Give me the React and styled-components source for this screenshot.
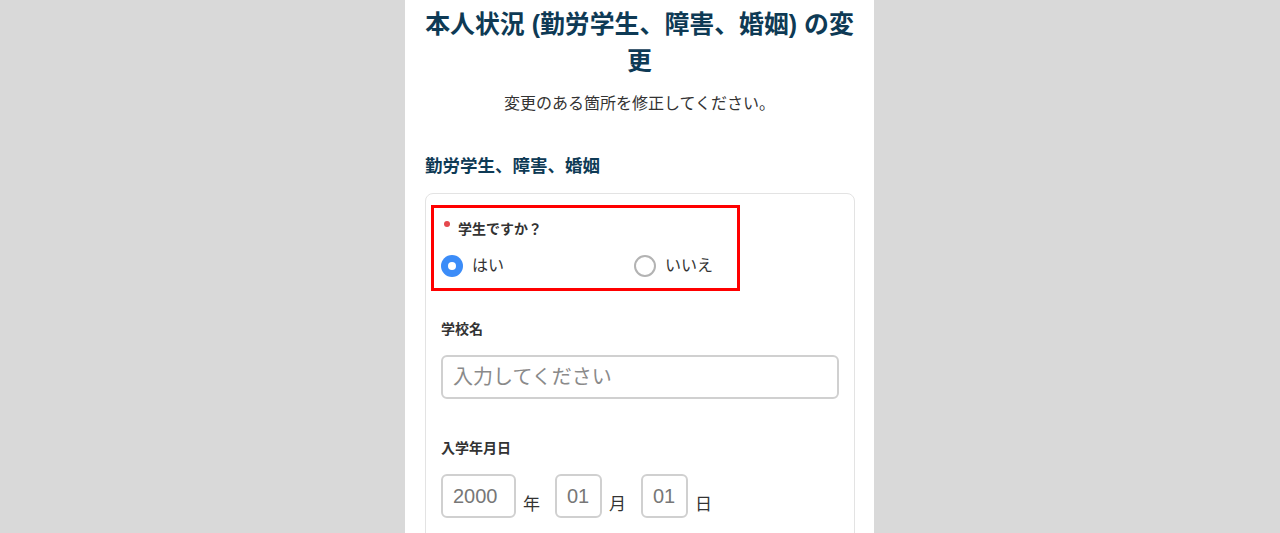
import React, { useState } from 'react';
import styled, { createGlobalStyle } from 'styled-components';

const Global = createGlobalStyle`
  html, body {
    margin: 0;
    padding: 0;
    background: #d9d9d9;
    font-family: "Liberation Sans", "Noto Sans CJK JP", sans-serif;
    color: #333;
  }
  * { box-sizing: border-box; }
`;

const Page = styled.div`
  display: flex;
  padding-left: 405px;
  height: 533px;
  overflow: hidden;
`;

const Column = styled.div`
  width: 469px;
  background: #fff;
  padding: 6px 19px 0 19px;
`;

const Title = styled.h1`
  margin: 0;
  text-align: center;
  font-size: 24.9px;
  line-height: 37px;
  font-weight: 700;
  color: #0e3a55;
`;

const Lead = styled.p`
  margin: 13px 0 0;
  text-align: center;
  font-size: 16px;
  line-height: 22px;
  color: #333;
`;

const SectionTitle = styled.h2`
  margin: 39px 0 0 1px;
  font-size: 17.5px;
  line-height: 24px;
  font-weight: 700;
  color: #0e3a55;
`;

const Card = styled.div`
  margin: 15px 0 0 1px;
  border: 1px solid #e3e3e3;
  border-radius: 8px;
  padding: 16px 15px 40px;
`;

const Field = styled.div`
  position: relative;
  padding-top: ${(p) => p.top || 0}px;
  margin-bottom: ${(p) => p.gap || 30}px;
`;

const Highlight = styled.div`
  position: absolute;
  left: -10px;
  top: -5px;
  width: 309px;
  height: 86px;
  border: 3px solid #ff0000;
  pointer-events: none;
`;

const Label = styled.div`
  position: relative;
  font-size: 14px;
  line-height: 20px;
  font-weight: 700;
  color: #333;
  padding-left: ${(p) => (p.required ? 17 : 0)}px;
`;

const Dot = styled.span`
  position: absolute;
  left: 3px;
  top: 2px;
  width: 6px;
  height: 6px;
  border-radius: 50%;
  background: #e5484d;
`;

const RadioRow = styled.div`
  display: grid;
  grid-template-columns: 193px 120px;
  margin-top: 16px;
`;

const RadioLabel = styled.label`
  display: flex;
  align-items: center;
  gap: 9px;
  font-size: 16px;
  line-height: 22px;
  color: #333;
  cursor: pointer;
`;

const RadioCircle = styled.span`
  width: 22px;
  height: 22px;
  border-radius: 50%;
  display: flex;
  align-items: center;
  justify-content: center;
  background: ${(p) => (p.checked ? '#3b8cf8' : '#fff')};
  border: ${(p) => (p.checked ? 'none' : '2px solid #b3b3b3')};
  &::after {
    content: '';
    width: 8px;
    height: 8px;
    border-radius: 50%;
    background: #fff;
    display: ${(p) => (p.checked ? 'block' : 'none')};
  }
`;

const TextInput = styled.input`
  display: block;
  width: 100%;
  height: 44px;
  margin-top: 16px;
  border: 2px solid #d0d0d0;
  border-radius: 6px;
  padding: 0 10px;
  font-family: "Liberation Sans", "Noto Sans CJK JP", sans-serif;
  font-size: 20px;
  color: #333;
  outline: none;
  &::placeholder { color: #8a8a8a; }
`;

const DateRow = styled.div`
  display: flex;
  align-items: flex-end;
  margin-top: 16px;
`;

const DateInput = styled.input`
  width: ${(p) => p.w}px;
  height: 44px;
  border: 2px solid #d0d0d0;
  border-radius: 6px;
  padding: 0 0 0 10px;
  font-family: "Liberation Sans", "Noto Sans CJK JP", sans-serif;
  font-size: 20px;
  color: #333;
  outline: none;
  &::placeholder { color: #777; }
`;

const Unit = styled.span`
  font-size: 17px;
  line-height: 22px;
  color: #333;
  margin: 0 15px 2px 7px;
`;

export default function App() {
  const [student, setStudent] = useState('yes');
  return (
    <>
      <Global />
      <Page>
        <Column>
          <Title>本人状況 (勤労学生、障害、婚姻) の変更</Title>
          <Lead>変更のある箇所を修正してください。</Lead>
          <SectionTitle>勤労学生、障害、婚姻</SectionTitle>
          <Card>
            <Field top={9} gap={42}>
              <Highlight />
              <Label required>
                <Dot />
                学生ですか？
              </Label>
              <RadioRow>
                <RadioLabel onClick={() => setStudent('yes')}>
                  <RadioCircle checked={student === 'yes'} />
                  はい
                </RadioLabel>
                <RadioLabel onClick={() => setStudent('no')}>
                  <RadioCircle checked={student === 'no'} />
                  いいえ
                </RadioLabel>
              </RadioRow>
            </Field>
            <Field gap={39}>
              <Label>学校名</Label>
              <TextInput placeholder="入力してください" />
            </Field>
            <Field>
              <Label>入学年月日</Label>
              <DateRow>
                <DateInput w={75} placeholder="2000" />
                <Unit>年</Unit>
                <DateInput w={47} placeholder="01" />
                <Unit>月</Unit>
                <DateInput w={47} placeholder="01" />
                <Unit>日</Unit>
              </DateRow>
            </Field>
          </Card>
        </Column>
      </Page>
    </>
  );
}
